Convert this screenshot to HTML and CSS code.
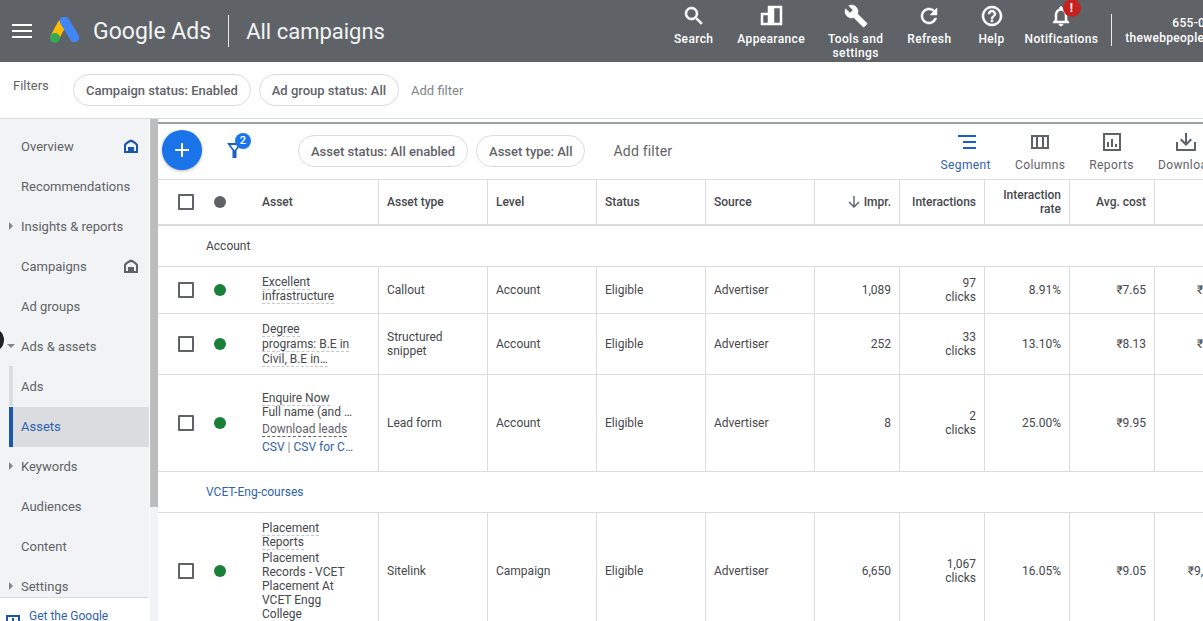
FILE: index.html
```html
<!DOCTYPE html>
<html lang="en">
<head>
<meta charset="utf-8">
<title>Google Ads - All campaigns</title>
<link rel="stylesheet" href="styles.css">
</head>
<body>
<header class="topbar">
  <div class="brand">
    <svg class="menu-icon" viewBox="0 0 20 14"><path d="M0 0h20v2H0zM0 6h20v2H0zM0 12h20v2H0z"/></svg>
    <svg class="logo" viewBox="0 0 30 28">
      <path d="M12 7 5 20" stroke="#fbbc04" stroke-width="9" stroke-linecap="round"/>
      <path d="M14.500 4 24.500 20.500" stroke="#4285f4" stroke-width="9.500" stroke-linecap="round"/>
      <circle cx="5" cy="21" r="5" fill="#34a853"/>
    </svg>
    <span class="brand-name">Google Ads</span>
    <span class="brand-divider"></span>
    <span class="brand-page">All campaigns</span>
  </div>
  <nav class="top-nav">
    <a class="top-item item-search"><svg viewBox="0 0 24 24"><path d="M15.5 14h-.79l-.28-.27C15.41 12.59 16 11.11 16 9.5 16 5.91 13.09 3 9.5 3S3 5.91 3 9.5 5.91 16 9.5 16c1.61 0 3.09-.59 4.23-1.57l.27.28v.79l5 4.99L20.49 19l-4.99-5zm-6 0C7.01 14 5 11.99 5 9.5S7.01 5 9.5 5 14 7.01 14 9.5 11.99 14 9.5 14z"/></svg><span>Search</span></a>
    <a class="top-item item-appearance"><svg viewBox="0 0 24 24"><path fill-rule="evenodd" d="M2 9h7V2h14v19H2zM4 11v8h5v-8zM15 4v15h6V4z"/></svg><span>Appearance</span></a>
    <a class="top-item item-tools"><svg viewBox="0 0 24 24"><path d="M22.7 19l-9.1-9.1c.9-2.3.4-5-1.5-6.9-2-2-5-2.400-7.400-1.300L9 6 6 9 1.600 4.700C.4 7.100.9 10.100 2.900 12.100c1.900 1.900 4.600 2.400 6.900 1.500l9.100 9.100c.4.400 1 .4 1.400 0l2.300-2.300c.5-.4.5-1.100.1-1.400z"/></svg><span>Tools and<br>settings</span></a>
    <a class="top-item item-refresh"><svg viewBox="0 0 24 24"><path d="M17.65 6.35C16.2 4.9 14.21 4 12 4c-4.42 0-7.99 3.58-7.99 8s3.57 8 7.99 8c3.73 0 6.84-2.55 7.73-6h-2.08c-.82 2.33-3.04 4-5.65 4-3.31 0-6-2.69-6-6s2.69-6 6-6c1.66 0 3.14.69 4.22 1.78L13 11h7V4l-2.35 2.35z"/></svg><span>Refresh</span></a>
    <a class="top-item item-help"><svg viewBox="0 0 24 24"><path d="M11 18h2v-2h-2v2zm1-16C6.48 2 2 6.48 2 12s4.48 10 10 10 10-4.48 10-10S17.52 2 12 2zm0 18c-4.41 0-8-3.59-8-8s3.59-8 8-8 8 3.59 8 8-3.59 8-8 8zm0-14c-2.21 0-4 1.79-4 4h2c0-1.1.9-2 2-2s2 .9 2 2c0 2-3 1.75-3 5h2c0-2.25 3-2.5 3-5 0-2.21-1.79-4-4-4z"/></svg><span>Help</span></a>
    <a class="top-item item-notify"><svg viewBox="0 0 24 24"><path d="M12 22c1.1 0 2-.9 2-2h-4c0 1.1.9 2 2 2zm6-6v-5c0-3.07-1.63-5.64-4.5-6.32V4c0-.83-.67-1.5-1.5-1.5s-1.5.67-1.5 1.5v.68C7.64 5.36 6 7.92 6 11v5l-2 2v1h16v-1l-2-2zm-2 1H8v-6c0-2.48 1.51-4.5 4-4.5s4 2.02 4 4.5v6z"/></svg><b class="alert">!</b><span>Notifications</span></a>
  </nav>
  <div class="account">
    <div>655-098-2214</div>
    <div>thewebpeopleindia@gmail.com</div>
  </div>
</header>

<section class="filters">
  <span class="filters-label">Filters</span>
  <span class="chip">Campaign status: Enabled</span>
  <span class="chip">Ad group status: All</span>
  <span class="filters-add">Add filter</span>
</section>

<div class="workspace">
  <aside class="sidebar">
    <div class="side-col">
      <ul class="side-nav">
        <li class="side-item"><i class="caret"></i>Overview<svg class="home home-blue" viewBox="0 0 14 14"><path fill-rule="evenodd" d="M7 .5C9 .9 13 3.6 14 5.5V14H0V5.5C1 3.6 5 .9 7 .5zM7 3C5.6 3.4 3 5 2 6.4V12h2V8h6v4h2V6.4C11 5 8.4 3.4 7 3z"/></svg></li>
        <li class="side-item"><i class="caret"></i>Recommendations</li>
        <li class="side-item"><i class="caret caret-right"></i>Insights &amp; reports</li>
        <li class="side-item"><i class="caret"></i>Campaigns<svg class="home" viewBox="0 0 14 14"><path fill-rule="evenodd" d="M7 .5C9 .9 13 3.6 14 5.5V14H0V5.5C1 3.6 5 .9 7 .5zM7 3C5.6 3.4 3 5 2 6.4V12h2V8h6v4h2V6.4C11 5 8.4 3.4 7 3z"/></svg></li>
        <li class="side-item"><i class="caret"></i>Ad groups</li>
        <li class="side-item"><i class="caret caret-down"></i>Ads &amp; assets</li>
        <li class="side-item side-sub">Ads</li>
        <li class="side-item side-sub side-active">Assets</li>
        <li class="side-item"><i class="caret caret-right"></i>Keywords</li>
        <li class="side-item"><i class="caret"></i>Audiences</li>
        <li class="side-item"><i class="caret"></i>Content</li>
        <li class="side-item"><i class="caret caret-right"></i>Settings</li>
      </ul>
      <div class="side-foot">
        <svg viewBox="0 0 14 14"><path fill-rule="evenodd" d="M0 2h14v12H0zM2 4v8h10V4zM6 5h2v3h2L7 11 4 8h2z"/></svg>
        <span>Get the Google</span>
      </div>
    </div>
    <div class="scroll-track"><div class="scroll-thumb"></div></div>
    <span class="collapse-knob"></span>
  </aside>

  <main class="content">
    <div class="toolbar">
      <button class="fab"><svg viewBox="0 0 16 16"><path d="M7 1h2v6h6v2H9v6H7V9H1V7h6z"/></svg></button>
      <span class="funnel">
        <svg viewBox="0 0 15 15"><path fill-rule="evenodd" d="M0 0h15L9.500 7.500V15h-4V7.500zM3.500 2l4 5.500 4-5.500z"/></svg>
        <b class="funnel-badge">2</b>
      </span>
      <span class="chip chip-tool">Asset status: All enabled</span>
      <span class="chip chip-tool">Asset type: All</span>
      <span class="tool-add">Add filter</span>
      <a class="tool tool-on"><svg viewBox="0 0 20 16"><path d="M2 1h18v2H2zM7 7h13v2H7zM7 13h13v2H7z"/></svg>Segment</a>
      <a class="tool"><svg viewBox="0 0 20 16"><path fill-rule="evenodd" d="M1 1h18v14H1zM3 3v10h3V3zM8 3v10h4V3zM14 3v10h3V3z"/></svg>Columns</a>
      <a class="tool"><svg viewBox="0 0 20 20"><path fill-rule="evenodd" d="M1 1h18v18H1zM3 3v14h14V3zM5 10h2v5H5zM9 7h2v8H9zM13 12h2v3h-2z"/></svg>Reports</a>
      <a class="tool"><svg viewBox="0 0 20 20"><path d="M18 10v7H2v-7H0v8c0 .6.4 1 1 1h18c.6 0 1-.4 1-1v-8zM11 1H9v9L5.500 6.600 4 8l6 6 6-6-1.500-1.400L11 10z"/></svg>Download</a>
    </div>

    <table class="grid">
      <colgroup>
        <col class="c-check"><col class="c-dot"><col class="c-asset">
        <col class="c-text"><col class="c-text"><col class="c-text"><col class="c-text">
        <col class="c-num"><col class="c-num"><col class="c-num"><col class="c-num"><col class="c-last">
      </colgroup>
      <thead>
        <tr class="head-row">
          <th class="plain"><span class="box"></span></th>
          <th class="plain"><span class="dot dot-grey"></span></th>
          <th class="asset-cell">Asset</th>
          <th>Asset type</th><th>Level</th><th>Status</th><th>Source</th>
          <th class="num"><svg class="sort" viewBox="0 0 12 12"><path d="M5.300 0h1.400v9.300L10.500 5.500l1 1L6 12 .5 6.500l1-1 3.800 3.800z"/></svg>Impr.</th>
          <th class="num">Interactions</th>
          <th class="num">Interaction rate</th>
          <th class="num">Avg. cost</th>
          <th class="num"></th>
        </tr>
      </thead>
      <tbody>
        <tr class="group-row"><td colspan="12">Account</td></tr>
        <tr class="row-1">
          <td class="plain"><span class="box"></span></td>
          <td class="plain"><span class="dot"></span></td>
          <td class="asset-cell"><span class="dash">Excellent infrastructure</span></td>
          <td>Callout</td><td>Account</td><td>Eligible</td><td>Advertiser</td>
          <td class="num">1,089</td><td class="num">97<br>clicks</td><td class="num">8.91%</td><td class="num">₹7.65</td><td class="num">₹742.35</td>
        </tr>
        <tr class="row-2">
          <td class="plain"><span class="box"></span></td>
          <td class="plain"><span class="dot"></span></td>
          <td class="asset-cell"><span class="dash">Degree<br>programs: B.E in<br>Civil, B.E in…</span></td>
          <td>Structured<br>snippet</td><td>Account</td><td>Eligible</td><td>Advertiser</td>
          <td class="num">252</td><td class="num">33<br>clicks</td><td class="num">13.10%</td><td class="num">₹8.13</td><td class="num">₹268.29</td>
        </tr>
        <tr class="row-3">
          <td class="plain"><span class="box"></span></td>
          <td class="plain"><span class="dot"></span></td>
          <td class="asset-cell">
            <span class="dash">Enquire Now</span><br>Full name (and …
            <div class="lead-link"><span class="dash-dark">Download leads</span></div>
            <div class="lead-csv"><span class="link">CSV</span> | <span class="link">CSV for C…</span></div>
          </td>
          <td>Lead form</td><td>Account</td><td>Eligible</td><td>Advertiser</td>
          <td class="num">8</td><td class="num">2<br>clicks</td><td class="num">25.00%</td><td class="num">₹9.95</td><td class="num">₹19.90</td>
        </tr>
        <tr class="group-row"><td colspan="12" class="link">VCET-Eng-courses</td></tr>
        <tr class="row-4">
          <td class="plain"><span class="box"></span></td>
          <td class="plain"><span class="dot"></span></td>
          <td class="asset-cell">
            <span class="dash">Placement<br>Reports</span>
            <div class="site-desc">Placement<br>Records - VCET<br>Placement At<br>VCET Engg<br>College</div>
          </td>
          <td>Sitelink</td><td>Campaign</td><td>Eligible</td><td>Advertiser</td>
          <td class="num">6,650</td><td class="num">1,067<br>clicks</td><td class="num">16.05%</td><td class="num">₹9.05</td><td class="num">₹9,653.35</td>
        </tr>
      </tbody>
    </table>
  </main>
</div>
</body>
</html>
```
FILE: styles.css
```css
* { box-sizing: border-box; }
html, body { margin: 0; height: 100%; }
body {
  width: 1203px;
  height: 621px;
  overflow: hidden;
  font-family: Roboto, "Liberation Sans", sans-serif;
  color: #45484c;
  background: #fff;
}

/* top bar */
.topbar {
  display: flex;
  align-items: stretch;
  height: 62px;
  background: #5f6368;
  color: #fff;
  overflow: hidden;
}
.brand {
  flex: 0 0 674px;
  display: flex;
  align-items: center;
  padding-left: 12px;
}
.menu-icon { width: 20px; height: 14px; fill: #fff; }
.logo { width: 30px; height: 28px; margin-left: 18px; }
.brand-name { margin-left: 13px; font-size: 23px; color: #f1f3f4; }
.brand-divider { width: 1px; height: 32px; margin: 0 17px; background: #e8eaed; }
.brand-page { font-size: 22px; color: #f1f3f4; }

.top-nav { flex: none; display: flex; gap: 23px; }
.top-item {
  flex: none;
  position: relative;
  display: flex;
  flex-direction: column;
  align-items: center;
  padding-top: 4px;
  font-size: 12px;
  font-weight: 500;
  line-height: 14px;
  letter-spacing: .35px;
  text-align: center;
}
.top-item svg { width: 24px; height: 24px; fill: #fff; stroke: #fff; stroke-width: .5; margin-bottom: 4px; }
.item-appearance { margin-left: 1px; }
.item-refresh { margin-left: 1px; }
.item-help { margin-left: 4px; }
.item-notify { margin-left: -3px; }
.alert {
  position: absolute;
  top: -1px;
  left: 38px;
  width: 18px;
  height: 18px;
  border-radius: 50%;
  background: #c5221f;
  font-size: 12px;
  line-height: 18px;
}
.account {
  flex: none;
  align-self: center;
  width: 174px;
  margin-left: 27px;
  font-size: 12px;
  font-weight: 500;
  line-height: 15px;
  letter-spacing: .3px;
  text-align: center;
  white-space: nowrap;
  position: relative;
}
.account::before {
  content: "";
  position: absolute;
  left: -14px;
  top: -2px;
  width: 1px;
  height: 32px;
  background: #e8eaed;
}

/* filter bar */
.filters {
  display: flex;
  align-items: center;
  height: 57px;
  padding-left: 13px;
  border-bottom: 1px solid #dadce0;
}
.filters-label { width: 60px; margin-top: -10px; font-size: 13px; color: #5f6368; }
.chip {
  flex: none;
  display: inline-flex;
  align-items: center;
  height: 32px;
  padding: 0 12px;
  margin-right: 8px;
  border: 1px solid #dadce0;
  border-radius: 16px;
  font-size: 13px;
  font-weight: 500;
  color: #5f6368;
}
.filters-add { margin-left: 4px; font-size: 13px; color: #80868b; }

/* layout below */
.workspace { position: relative; display: flex; height: 502px; }

/* sidebar */
.sidebar { flex: 0 0 158px; display: flex; }
.side-col {
  flex: 0 0 150px;
  display: flex;
  flex-direction: column;
  background: #f1f3f4;
  border-right: 1px solid #fff;
}
.side-nav {
  flex: 1;
  min-height: 0;
  margin: 0;
  padding: 7px 0 0;
  list-style: none;
  overflow: hidden;
}
.side-item {
  display: flex;
  align-items: center;
  height: 40px;
  font-size: 13px;
  color: #5f6368;
}
.caret { flex: 0 0 21px; display: flex; justify-content: center; }
.caret-right::before, .caret-down::before { content: ""; width: 0; height: 0; }
.caret-right::before {
  border-left: 4px solid #80868b;
  border-top: 4px solid transparent;
  border-bottom: 4px solid transparent;
}
.caret-down::before {
  border-top: 4px solid #80868b;
  border-left: 4px solid transparent;
  border-right: 4px solid transparent;
}
.home { width: 14px; height: 14px; margin-left: auto; margin-right: 11px; fill: #5f6368; }
.home-blue { fill: #1a56b0; }
.side-sub { margin-left: 9px; padding-left: 8px; border-left: 4px solid #dadce0; }
.side-active {
  margin-top: 1px;
  margin-bottom: -1px;
  padding-bottom: 2px;
  border-left-color: #1c57a8;
  background: #dadce0;
  color: #2f62ad;
}
.side-foot {
  flex: none;
  display: flex;
  align-items: flex-start;
  height: 24px;
  padding: 11px 0 0 6px;
  background: #fff;
  border-top: 1px solid #dadce0;
  font-size: 12px;
  line-height: 14px;
  color: #2f62ad;
  overflow: hidden;
}
.side-foot svg { width: 14px; height: 14px; margin: 4px 9px 0 0; fill: #1a56b0; }
.scroll-track { flex: 1; background: #f1f3f4; }
.scroll-thumb { height: 388px; background: #bdbdbd; }
.collapse-knob {
  position: absolute;
  left: -20px;
  top: 209px;
  width: 24px;
  height: 24px;
  border-radius: 50%;
  background: #202124;
}

/* main */
.content { flex: 1; min-width: 0; padding-top: 3px; overflow: hidden; }
.toolbar {
  display: flex;
  align-items: flex-start;
  height: 58px;
  border-top: 2px solid #9aa0a6;
  border-bottom: 1px solid #dadce0;
}
.fab {
  flex: none;
  width: 40px;
  height: 40px;
  margin: 6px 0 0 4px;
  padding: 12px;
  border: 0;
  border-radius: 50%;
  background: #1a73e8;
  box-shadow: 0 1px 3px rgba(60, 64, 67, .4);
}
.fab svg { display: block; width: 16px; height: 16px; fill: #fff; }
.funnel { flex: none; position: relative; width: 71px; height: 40px; margin-left: 25px; }
.funnel svg { position: absolute; left: 0; top: 19px; width: 15px; height: 15px; fill: #1a5fc4; }
.funnel-badge {
  position: absolute;
  left: 8px;
  top: 9px;
  width: 16px;
  height: 16px;
  border-radius: 50%;
  background: #1a73e8;
  color: #fff;
  font-size: 11px;
  font-weight: 500;
  line-height: 16px;
  text-align: center;
}
.chip-tool { margin-top: 11px; }
.tool-add { flex: 0 0 327px; margin: 19px 0 0 20px; font-size: 14px; color: #5f6368; letter-spacing: .2px; }
.tool {
  flex: none;
  display: flex;
  flex-direction: column;
  align-items: center;
  margin-right: 24px;
  padding-top: 8px;
  font-size: 12px;
  color: #5f6368;
  letter-spacing: .4px;
}
.tool svg { width: 20px; height: 20px; margin-bottom: 6px; fill: #5f6368; }
.tool-on { color: #2f62ad; }
.tool-on svg { fill: #1a5fc4; }

/* table */
.grid {
  width: 1089px;
  table-layout: fixed;
  border-collapse: separate;
  border-spacing: 0;
  font-size: 12px;
  line-height: 14px;
}
.c-check { width: 48px; }
.c-dot { width: 28px; }
.c-asset { width: 145px; }
.c-text { width: 109px; }
.c-num { width: 85px; }
.c-last { width: 94px; }
.grid th, .grid td {
  padding: 0 8px;
  border-right: 1px solid #dadce0;
  border-bottom: 1px solid #dadce0;
  text-align: left;
  vertical-align: middle;
  font-weight: 400;
}
.grid th { height: 46px; border-bottom-width: 2px; font-weight: 500; }
.grid .plain { padding: 0; border-right: 0; }
.grid .asset-cell { padding-left: 28px; }
.grid .num { text-align: right; }
.grid .group-row td { height: 41px; padding-left: 48px; border-right: 0; }
.row-1 td { height: 47px; }
.row-2 td { height: 61px; }
.row-3 td { height: 97px; }
.row-4 td { height: 116px; }
.grid .row-1 .asset-cell, .grid .row-3 .asset-cell { padding-bottom: 2px; }
.row-2 .asset-cell { line-height: 15px; }
.box {
  display: block;
  width: 16px;
  height: 16px;
  margin-left: 20px;
  border: 2px solid #5f6368;
  border-radius: 1px;
}
.dot {
  display: block;
  width: 12px;
  height: 12px;
  margin-left: 8px;
  border-radius: 50%;
  background: #188038;
}
.dot-grey { background: #5f6368; }
.sort { width: 12px; height: 12px; margin-right: 4px; fill: #5f6368; vertical-align: -2px; }
.dash { border-bottom: 1px dashed #c4c7cc; }
.dash-dark { border-bottom: 1px dashed #5f6368; }
.link { color: #2f62ad; }
.lead-link { margin-top: 3px; color: #5f6368; }
.lead-csv { margin-top: 4px; color: #80868b; }
.site-desc { margin-top: 2px; }
```
